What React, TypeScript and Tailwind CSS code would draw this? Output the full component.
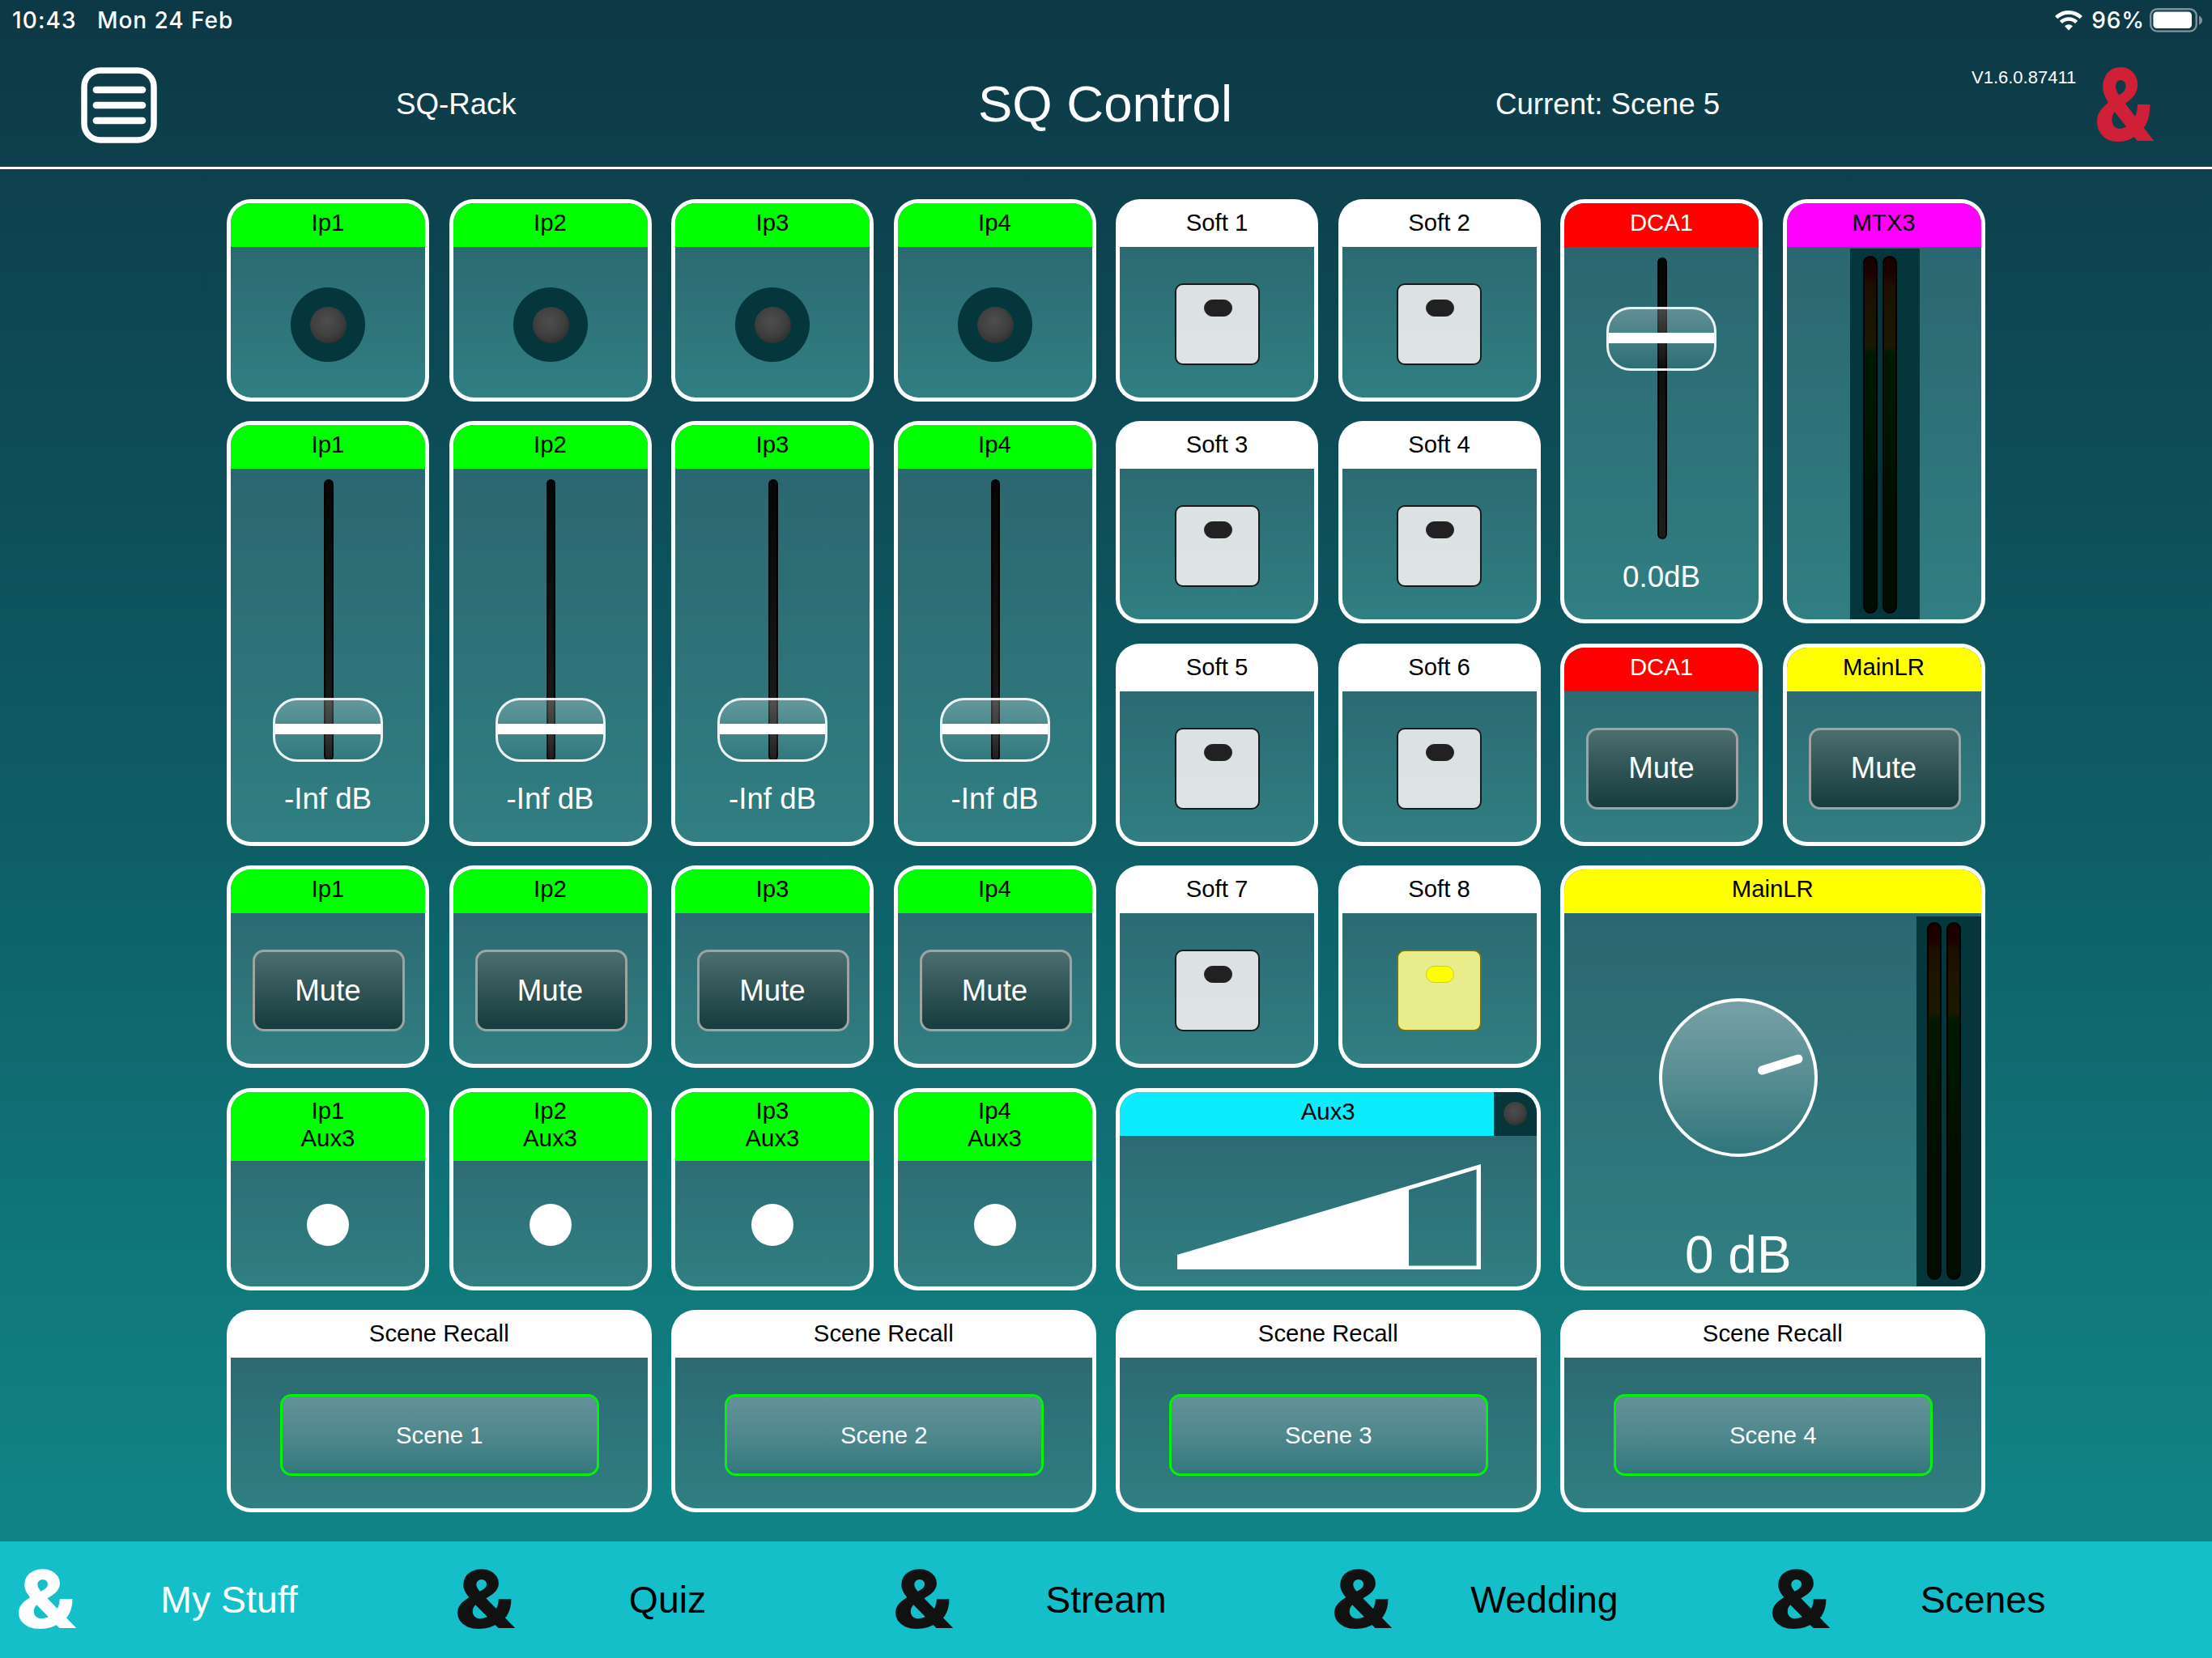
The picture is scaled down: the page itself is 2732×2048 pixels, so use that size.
// SQ Control: the "My Stuff" page of the mixer remote.
//
// A fixed 8 x 6 grid of square cells. Every widget is a Panel that spans one or
// more cells and has a coloured name strip on top.

import type { ReactNode } from 'react';
import clsx from 'clsx';

const CHANNELS = ['Ip1', 'Ip2', 'Ip3', 'Ip4'];
const SOFT_KEYS = [1, 2, 3, 4, 5, 6, 7, 8];
const SCENES = ['Scene 1', 'Scene 2', 'Scene 3', 'Scene 4'];
const TABS = ['My Stuff', 'Quiz', 'Stream', 'Wedding', 'Scenes'];

const STRIP_COLORS = {
  green: 'bg-[#00ff00] text-black',
  white: 'bg-white text-black',
  red: 'bg-[#ff0000] text-white',
  magenta: 'bg-[#ff00ff] text-black',
  yellow: 'bg-[#ffff00] text-black',
  cyan: 'bg-[#0cecff] text-black',
};

interface PanelProps {
  name: string;
  source?: string;
  color: keyof typeof STRIP_COLORS;
  className?: string;
  corner?: ReactNode;
  children: ReactNode;
}

// The white frame is the padding of the outer box. A white strip keeps square
// corners and is clipped by that box, so it joins the frame without a seam.
function Panel({ name, source, color, className, corner, children }: PanelProps) {
  return (
    <section className={clsx('flex overflow-hidden rounded-[30px] bg-white p-[5px]', className)}>
      <div
        className={clsx(
          'flex flex-1 flex-col overflow-hidden bg-linear-to-b from-[#2b646e] to-[#307f82]',
          color === 'white' ? 'rounded-b-[25px]' : 'rounded-[25px]',
        )}
      >
        <header
          className={clsx(
            'relative shrink-0 text-center text-[29.33px] leading-[34px]',
            source ? 'h-[85px] pt-[6px]' : 'h-[54px] pt-[7px]',
            STRIP_COLORS[color],
          )}
        >
          <div>{name}</div>
          {source ? <div>{source}</div> : null}
          {corner}
        </header>
        {children}
      </div>
    </section>
  );
}

function Led() {
  return (
    <div className="mx-auto mt-[50px] flex size-[92px] items-center justify-center rounded-full bg-[#05363b] pt-[2px] pl-[1px]">
      <div className="size-[45px] rounded-full bg-[radial-gradient(circle_at_45%_40%,#4e4e4e_0%,#3f3f3f_50%,#222_100%)]" />
    </div>
  );
}

function Fader({ value, atUnity = false }: { value: string; atUnity?: boolean }) {
  return (
    <>
      <div className="relative mx-auto mt-[13px] h-[348px] w-[136px] shrink-0">
        <div className="mx-auto h-full w-[11.5px] translate-x-px rounded-full border-2 border-black bg-linear-to-b from-[#060606] to-[#1e1e1e]" />
        <div
          className={clsx(
            'absolute left-0 flex h-[79px] w-[136px] items-center rounded-[30px] border-3 border-white/90 bg-linear-to-b from-white/25 to-white/0',
            atUnity ? 'top-[61px]' : 'top-[270px]',
          )}
        >
          <div className="h-[13px] w-full -translate-y-px bg-white" />
        </div>
      </div>
      <div className="mt-[26px] text-center text-[36.67px] leading-[42px] text-white">{value}</div>
    </>
  );
}

function MuteButton() {
  return (
    <button className="mx-auto mt-[45px] h-[101px] w-[188px] translate-x-px rounded-[14px] border-3 border-[#9fa3a3] bg-linear-to-b from-[#4b6e6f] to-[#153c3e] pr-[2px] text-[36.67px] leading-[42px] text-white">
      Mute
    </button>
  );
}

function SoftKey({ on }: { on: boolean }) {
  return (
    <div
      className={clsx(
        'mx-auto mt-[45px] h-[101px] w-[105px] rounded-[10px] border-2 pt-[18px]',
        on ? 'border-[#74730d] bg-[#e8ec8a]' : 'border-[#1a1a1a] bg-linear-to-b from-[#dce1e4] to-[#dce4e3]',
      )}
    >
      <div
        className={clsx(
          'mx-auto h-[21px] w-[35px] translate-x-px rounded-full border',
          on ? 'border-[#c9c83a] bg-[#ffff00]' : 'border-[#212121] bg-[#212121]',
        )}
      />
    </div>
  );
}

function MeterBars() {
  const bar =
    'h-full w-[18px] rounded-full border-2 border-black bg-[linear-gradient(to_bottom,#1c0000_4%,#1c1000_8%,#1c1900_25%,#001a00_27%,#000d00_75%)]';
  return (
    <div className="flex h-[442px] gap-[6.5px]">
      <div className={bar} />
      <div className={bar} />
    </div>
  );
}

function Knob() {
  return (
    <svg className="block size-[196px]" viewBox="0 0 196 196" fill="none">
      <defs>
        <linearGradient id="knob" x1="0" y1="0" x2="0" y2="1">
          <stop offset="0" stopColor="#fff" stopOpacity="0.36" />
          <stop offset="0.5" stopColor="#fff" stopOpacity="0.2" />
          <stop offset="1" stopColor="#fff" stopOpacity="0" />
        </linearGradient>
      </defs>
      <circle cx="98" cy="98" r="96" fill="url(#knob)" stroke="#fff" strokeWidth="4" />
      <path d="M127.5 89 172 75" stroke="#fff" strokeWidth="11" strokeLinecap="round" />
    </svg>
  );
}

function LevelWedge() {
  return (
    <svg className="mt-[35px] ml-[71px] block h-[130px] w-[375px]" viewBox="0 0 375 130" fill="#fff">
      <path fillRule="evenodd" d="M0 112 375 0V130H0ZM286 31.8V125.4H369.6V6.6Z" />
    </svg>
  );
}

// The viewBox is the ink box of the glyph, so the logo fills whatever size it is given.
function Ampersand({ className }: { className: string }) {
  return (
    <svg className={className} viewBox="2.1 -57.6 50.3 58.4" preserveAspectRatio="none" fill="currentColor">
      <text x="0" y="0" fontSize="80" fontWeight="900" fontFamily="Roboto, sans-serif">
        &amp;
      </text>
    </svg>
  );
}

function StatusBar() {
  return (
    <div className="flex h-[50px] items-center pr-[12px] pb-px pl-[15px] font-[Inter,sans-serif] text-[28px] font-medium text-white">
      <span className="w-[105px] tracking-[1.1px]">10:43</span>
      <span className="tracking-[0.95px]">Mon 24 Feb</span>
      <svg className="ml-auto h-[26px] w-[34px]" viewBox="0 0 34 26" fill="none" stroke="#fff" strokeWidth="4.6">
        <path d="M1.7 9.6a21.8 21.8 0 0 1 30.6 0" />
        <path d="M7.4 15.4a13.6 13.6 0 0 1 19.2 0" />
        <path d="M17 25.4l-5-5.1a7.2 7.2 0 0 1 10 0Z" fill="#fff" stroke="none" />
      </svg>
      <span className="mr-[6px] ml-[11px] tracking-[0.9px]">96%</span>
      <svg className="h-[30px] w-[65px]" viewBox="0 0 65 30" fill="none">
        <rect x="1.2" y="1.2" width="56.5" height="27.4" rx="8" stroke="#7d939b" strokeWidth="2.4" />
        <rect x="4.4" y="4.5" width="47.6" height="20.5" rx="4.5" fill="#fff" />
        <path d="M61 9.5q4 1.5 4 5.5t-4 5.5Z" fill="#7d939b" />
      </svg>
    </div>
  );
}

function TitleBar() {
  return (
    <div className="flex h-[159px] border-b-[3px] border-white text-white">
      <svg className="mt-[33px] mr-px ml-[100px] size-[94px] shrink-0" viewBox="0 0 94 94" fill="none" stroke="#fff">
        <rect x="4" y="4" width="86" height="86" rx="20" strokeWidth="7.5" />
        <path d="M18.8 28H76M18.8 47H76M18.8 66H76" strokeWidth="8.5" strokeLinecap="round" />
      </svg>
      <div className="mt-[57px] ml-[294px] w-[251px] shrink-0 text-[36.67px] leading-[44px]">SQ-Rack</div>
      <h1 className="mt-[42px] w-[1250px] shrink-0 text-center text-[63.5px] leading-[72px]">SQ Control</h1>
      <div className="mt-[57px] -ml-[143px] w-[400px] shrink-0 text-[36.67px] leading-[44px]">Current: Scene 5</div>
      <div className="mt-[33px] ml-[188px] w-[155px] shrink-0 text-[22px] leading-[26px]">V1.6.0.87411</div>
      <Ampersand className="mt-[33px] h-[92px] w-[70px] shrink-0 overflow-visible text-[#cf2037]" />
    </div>
  );
}

function TabBar() {
  return (
    <nav className="flex h-[144px] items-center overflow-hidden bg-[#14bfc9]">
      {TABS.map((tab, index) => (
        <div key={tab} className={clsx('flex w-[541.5px] shrink-0 items-center', index === 0 ? 'text-white' : 'text-[#111]')}>
          <Ampersand className="-mt-px ml-[23px] h-[73px] w-[71px] overflow-visible" />
          <span
            className={clsx('w-[378px] pb-px text-center text-[46.4px] leading-[56px]', index > 0 && 'text-black')}
          >
            {tab}
          </span>
        </div>
      ))}
    </nav>
  );
}

export default function App() {
  return (
    <div className="flex h-[2048px] w-[2732px] flex-col overflow-hidden bg-[linear-gradient(to_bottom,#0d3845_0px,#0d4450_300px,#0e5e66_1040px,#10797c_1600px,#118487_1904px)] font-['Liberation_Sans',Arial,sans-serif]">
      <StatusBar />
      <TitleBar />

      <main className="mt-[36.5px] ml-[280px] grid flex-1 grid-cols-[repeat(8,250px)] grid-rows-[repeat(6,250px)] gap-[24.5px]">
        {CHANNELS.map((name) => (
          <Panel key={name} name={name} color="green" className="row-start-1">
            <Led />
          </Panel>
        ))}
        {CHANNELS.map((name) => (
          <Panel key={name} name={name} color="green" className="row-span-2 row-start-2">
            <Fader value="-Inf dB" />
          </Panel>
        ))}
        {CHANNELS.map((name) => (
          <Panel key={name} name={name} color="green" className="row-start-4">
            <MuteButton />
          </Panel>
        ))}
        {CHANNELS.map((name) => (
          <Panel key={name} name={name} source="Aux3" color="green" className="row-start-5">
            <div className="mx-auto mt-[53px] size-[52px] rounded-full bg-white" />
          </Panel>
        ))}

        <div className="col-span-2 col-start-5 row-span-4 row-start-1 grid grid-cols-2 grid-rows-4 gap-[24.5px]">
          {SOFT_KEYS.map((key) => (
            <Panel key={key} name={`Soft ${key}`} color="white">
              <SoftKey on={key === 8} />
            </Panel>
          ))}
        </div>

        <Panel
          name="Aux3"
          color="cyan"
          className="col-span-2 col-start-5 row-start-5"
          corner={
            <div className="absolute top-0 right-0 flex h-full w-[52.5px] items-center justify-center bg-[#04363b]">
              <div className="size-[29px] rounded-full bg-[radial-gradient(circle_at_45%_40%,#4e4e4e_0%,#3f3f3f_50%,#222_100%)]" />
            </div>
          }
        >
          <LevelWedge />
        </Panel>

        <Panel name="DCA1" color="red" className="col-start-7 row-span-2 row-start-1">
          <Fader value="0.0dB" atUnity />
        </Panel>
        <Panel name="MTX3" color="magenta" className="col-start-8 row-span-2 row-start-1">
          <div className="mx-auto mt-[2px] w-[86px] flex-1 translate-x-px bg-[#05363b] pt-[9px] pl-[16px]">
            <MeterBars />
          </div>
        </Panel>
        <Panel name="DCA1" color="red" className="col-start-7 row-start-3">
          <MuteButton />
        </Panel>
        <Panel name="MainLR" color="yellow" className="col-start-8 row-start-3">
          <MuteButton />
        </Panel>
        <Panel name="MainLR" color="yellow" className="col-span-2 col-start-7 row-span-2 row-start-4">
          <div className="flex flex-1">
            <div className="flex flex-1 flex-col items-center pt-[105px] pr-[5px]">
              <Knob />
              <div className="mt-[85px] text-[64px] leading-[72px] text-white">0 dB</div>
            </div>
            <div className="mt-[4px] w-[80px] bg-[#05363b] pt-[7px] pl-[13px]">
              <MeterBars />
            </div>
          </div>
        </Panel>

        {SCENES.map((scene) => (
          <Panel key={scene} name="Scene Recall" color="white" className="col-span-2 row-start-6">
            <button className="mx-auto mt-[45px] h-[101px] w-[394px] translate-x-px rounded-[14px] border-3 border-[#00ff00]/90 bg-linear-to-b from-[#639399] via-[#4a858a] via-60% to-[#31797e] bg-clip-padding pr-px text-[29.33px] text-white">
              {scene}
            </button>
          </Panel>
        ))}
      </main>

      <TabBar />
    </div>
  );
}
